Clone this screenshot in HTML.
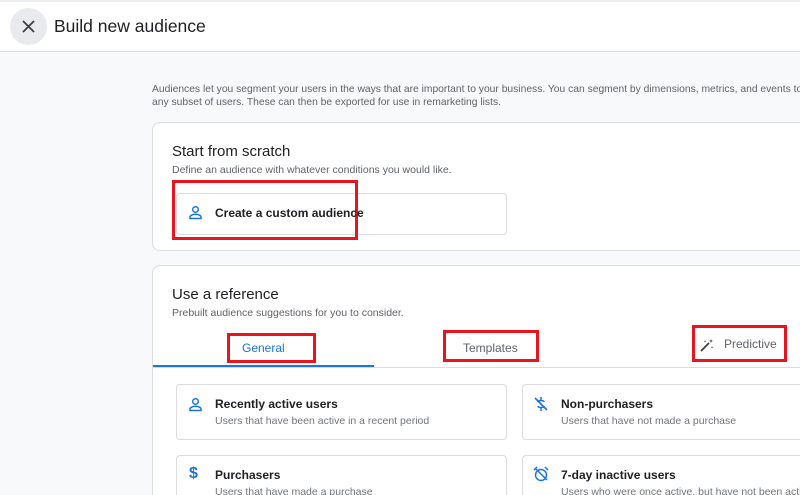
<!DOCTYPE html>
<html style="overflow:hidden;width:800px;height:495px"><head><style>
*{box-sizing:border-box;margin:0;padding:0}
body{width:800px;height:495px;overflow:hidden;background:#f8f9fa;font-family:"Liberation Sans",sans-serif;color:#202124}
#w{position:relative;width:800px;height:495px;overflow:hidden}
.a{position:absolute}
.hdr{left:0;top:2px;width:800px;height:50px;background:#fff;border-bottom:1px solid #dadce0}
.card{background:#fff;border:1px solid #dadce0;border-radius:8px}
.red{border:3px solid #e8141e}
.sub{background:#fff;border:1px solid #dadce0;border-radius:4px}
.t{font-size:12px;font-weight:bold;color:#202124}
.d{font-size:10.5px;color:#5f6368}
</style></head><body><div id="w">
<div class="a" style="left:0;top:0;width:800px;height:2px;background:#eee"></div>
<div class="a hdr"></div>
<div class="a" style="left:10px;top:8px;width:37px;height:37px;border-radius:50%;background:#e8eaed"></div>
<svg class="a" style="left:21px;top:19px" width="15" height="15" viewBox="0 0 15 15"><path d="M2 2L13 13M13 2L2 13" stroke="#3c4043" stroke-width="1.8"/></svg>
<div class="a" style="left:54px;top:16px;font-size:17.5px;color:#202124">Build new audience</div>
<div class="a d" style="left:152px;top:83px;line-height:13px;white-space:nowrap;font-size:10.3px">Audiences let you segment your users in the ways that are important to your business. You can segment by dimensions, metrics, and events to include<br>any subset of users. These can then be exported for use in remarketing lists.</div>
<div class="a card" style="left:152px;top:122px;width:660px;height:129px"></div>
<div class="a" style="left:172px;top:143px;font-size:15px">Start from scratch</div>
<div class="a d" style="left:172px;top:164px">Define an audience with whatever conditions you would like.</div>
<div class="a sub" style="left:176px;top:193px;width:331px;height:42px"></div>
<div class="a red" style="left:172px;top:180px;width:186px;height:60px"></div>
<svg class="a" style="left:188px;top:205px" width="15" height="15" viewBox="0 0 15 15"><circle cx="7.5" cy="4.5" r="2.8" fill="none" stroke="#1a73e8" stroke-width="1.5"/><path d="M2 13.5v-1.5c0-1.5 3-2.7 5.5-2.7s5.5 1.2 5.5 2.7v1.5z" fill="none" stroke="#1a73e8" stroke-width="1.5"/></svg>
<div class="a t" style="left:215px;top:206px;font-size:12px">Create a custom audience</div>
<div class="a card" style="left:152px;top:265px;width:660px;height:240px"></div>
<div class="a" style="left:172px;top:286px;font-size:15px">Use a reference</div>
<div class="a d" style="left:172px;top:307px">Prebuilt audience suggestions for you to consider.</div>
<div class="a" style="left:153px;top:367px;width:660px;height:1px;background:#dadce0"></div>
<div class="a" style="left:153px;top:365px;width:221px;height:2px;background:#1a73e8"></div>
<div class="a" style="left:242px;top:341px;font-size:12px;color:#1a73e8">General</div>
<div class="a" style="left:463px;top:341px;font-size:12px;color:#5f6368">Templates</div>
<svg class="a" style="left:699px;top:337px" width="16" height="16" viewBox="0 0 16 16"><path d="M2 14L10 6" stroke="#3c4043" stroke-width="1.8"/><path d="M12 2l.5 1.5L14 4l-1.5.5L12 6l-.5-1.5L10 4l1.5-.5zM6 3l.3 1 1 .3-1 .3L6 5.6l-.3-1-1-.3 1-.3zM13 9l.3 1 1 .3-1 .3-.3 1-.3-1-1-.3 1-.3z" fill="#3c4043"/></svg>
<div class="a" style="left:724px;top:337px;font-size:12px;color:#5f6368">Predictive</div>
<div class="a red" style="left:227px;top:333px;width:89px;height:30px"></div>
<div class="a red" style="left:443px;top:330px;width:96px;height:32px"></div>
<div class="a red" style="left:692px;top:325px;width:95px;height:37px"></div>
<div class="a sub" style="left:176px;top:384px;width:331px;height:56px"></div>
<div class="a sub" style="left:522px;top:384px;width:300px;height:56px"></div>
<div class="a sub" style="left:176px;top:455px;width:331px;height:56px"></div>
<div class="a sub" style="left:522px;top:455px;width:300px;height:56px"></div>
<svg class="a" style="left:188px;top:397px" width="15" height="15" viewBox="0 0 15 15"><circle cx="7.5" cy="4.5" r="2.8" fill="none" stroke="#1a73e8" stroke-width="1.5"/><path d="M2 13.5v-1.5c0-1.5 3-2.7 5.5-2.7s5.5 1.2 5.5 2.7v1.5z" fill="none" stroke="#1a73e8" stroke-width="1.5"/></svg>
<div class="a t" style="left:215px;top:397px">Recently active users</div>
<div class="a d" style="left:215px;top:415px;color:#70757a">Users that have been active in a recent period</div>
<svg class="a" style="left:533px;top:396px" width="16" height="16" viewBox="0 0 16 16"><path d="M2 2l12 12" stroke="#1a73e8" stroke-width="1.6"/><path d="M8 1v3M8 12v3M5 6c0-2 6-2 6 0M11 10c0 2-6 2-6 0" fill="none" stroke="#1a73e8" stroke-width="1.5"/></svg>
<div class="a t" style="left:561px;top:397px">Non-purchasers</div>
<div class="a d" style="left:561px;top:415px;color:#70757a">Users that have not made a purchase</div>
<div class="a" style="left:189px;top:465px;font-size:16px;font-weight:bold;color:#1a73e8">$</div>
<div class="a t" style="left:215px;top:468px">Purchasers</div>
<div class="a d" style="left:215px;top:486px;color:#70757a">Users that have made a purchase</div>
<svg class="a" style="left:533px;top:466px" width="16" height="16" viewBox="0 0 16 16"><circle cx="8" cy="9" r="5.5" fill="none" stroke="#1a73e8" stroke-width="1.5"/><path d="M2 2l12 12M1 4l3-3M15 4l-3-3" stroke="#1a73e8" stroke-width="1.5"/></svg>
<div class="a t" style="left:561px;top:468px">7-day inactive users</div>
<div class="a d" style="left:561px;top:486px;color:#70757a;white-space:nowrap">Users who were once active, but have not been active</div>
</div></body></html>
